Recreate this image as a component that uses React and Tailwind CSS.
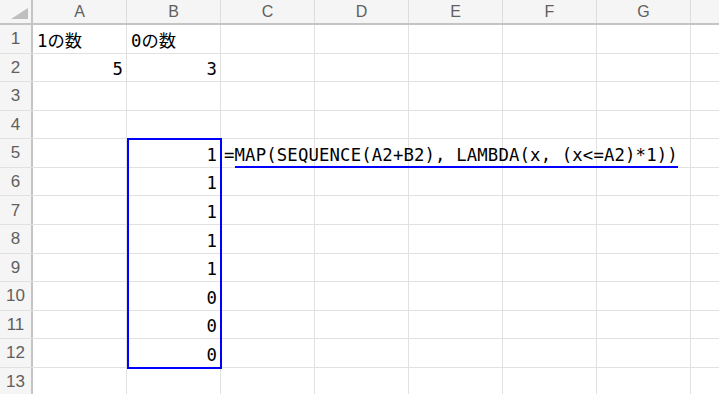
import React from 'react';

const columns = ['A', 'B', 'C', 'D', 'E', 'F', 'G'];

// cell values keyed by "row-col"
const cells = {
  '1-A': { text: '1の数', align: 'left' },
  '1-B': { text: '0の数', align: 'left' },
  '2-A': { text: '5', align: 'right' },
  '2-B': { text: '3', align: 'right' },
  '5-B': { text: '1', align: 'right' },
  '6-B': { text: '1', align: 'right' },
  '7-B': { text: '1', align: 'right' },
  '8-B': { text: '1', align: 'right' },
  '9-B': { text: '1', align: 'right' },
  '10-B': { text: '0', align: 'right' },
  '11-B': { text: '0', align: 'right' },
  '12-B': { text: '0', align: 'right' },
};

const cellFont = { fontFamily: '"DejaVu Sans Mono", "Noto Sans CJK JP", monospace' };

const Cell = ({ row, col }) => {
  const cell = cells[`${row}-${col}`];
  const isFormula = row === 5 && col === 'C';

  return (
    <div className="relative w-[94px] h-full shrink-0 border-r border-[#e1e1e1]">
      {cell && (
        <div
          className={`absolute inset-0 flex items-end pb-[2px] text-[17.3px] leading-[20px] text-black ${cell.align === 'right' ? 'justify-end pr-[3px]' : 'justify-start pl-[4px]'}`}
          style={cellFont}
        >
          {cell.text}
        </div>
      )}
      {isFormula && (
        <div
          className="absolute left-[3px] top-0 bottom-[-1px] z-10 flex items-stretch whitespace-nowrap text-[17.3px] tracking-[0.15px] text-black"
          style={cellFont}
        >
          <span className="flex items-end pb-[3px] leading-[20px]">=</span>
          <span className="flex items-end pb-[1px] leading-[20px] border-b-2 border-[#0000ff]">
            MAP(SEQUENCE(A2+B2), LAMBDA(x, (x&lt;=A2)*1))
          </span>
        </div>
      )}
    </div>
  );
};

export default function App() {
  const rows = Array.from({ length: 13 }, (_, i) => i + 1);

  return (
    <div className="relative w-[719px] h-[394px] overflow-hidden bg-white" style={{ fontFamily: '"Liberation Sans", Arial, sans-serif' }}>
      {/* column headers */}
      <div className="flex h-[25px] bg-[#f5f5f5] border-b-2 border-[#c4c4c4]">
        <div className="relative w-[33px] shrink-0 border-r-2 border-[#c4c4c4]">
          <svg className="absolute right-[3px] bottom-[4px]" width="17" height="11" viewBox="0 0 17 11">
            <polygon points="17,0 17,11 0,11" fill="#bfbfbf" />
          </svg>
        </div>
        {columns.map((c) => (
          <div key={c} className="w-[94px] shrink-0 flex items-center justify-center border-r border-[#dcdcdc] text-[16px] text-[#5f5f5f]">
            {c}
          </div>
        ))}
        <div className="flex-1" />
      </div>

      {/* grid rows */}
      <div className="relative">
        {rows.map((r) => (
          <div key={r} className="flex h-[28.58px] border-b border-[#e1e1e1]">
            <div className="w-[33px] shrink-0 flex items-center justify-center bg-[#f5f5f5] border-r-2 border-[#c4c4c4] text-[17px] text-[#5f5f5f]">
              {r}
            </div>
            {columns.map((c) => (
              <Cell key={c} row={r} col={c} />
            ))}
            <div className="flex-1" />
          </div>
        ))}

        {/* selection box over B5:B12 */}
        <div className="absolute left-[127px] top-[113.3px] w-[95px] h-[230.5px] border-2 border-[#0000ff] pointer-events-none z-20" />
      </div>
    </div>
  );
}
